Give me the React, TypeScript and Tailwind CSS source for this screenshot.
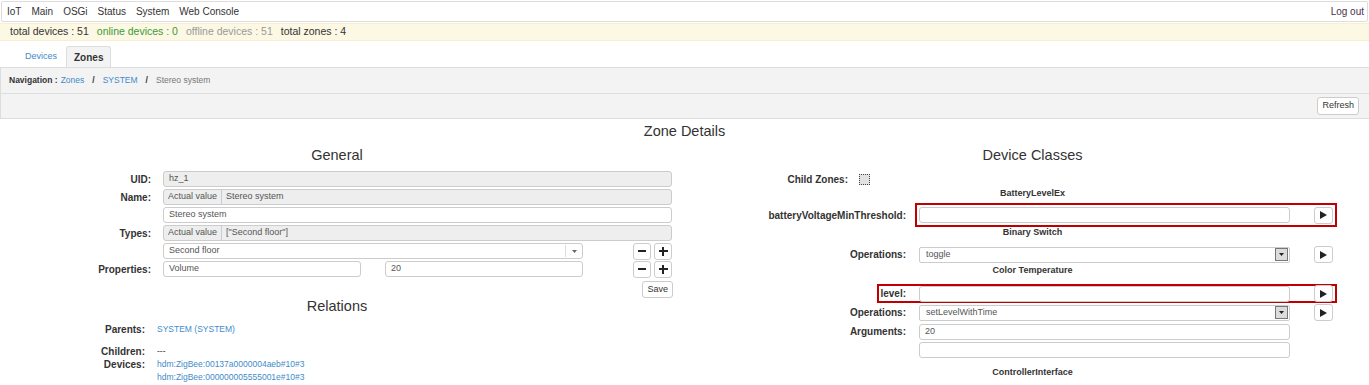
import React from 'react';

const Play = () => (
  <button className="w-[19px] h-[17px] shrink-0 bg-white border border-[#ccc] rounded-[3px] flex items-center justify-center">
    <svg width="7" height="8" viewBox="0 0 7 8"><path d="M0 0 L7 4 L0 8 Z" fill="#222" /></svg>
  </button>
);

const PlusMinus = () => (
  <div className="flex gap-[3px] ml-auto">
    <button className="w-[18px] h-[17px] bg-white border border-[#ccc] rounded-[3px] flex items-center justify-center">
      <span className="block w-[8px] h-[2px] bg-[#222]" />
    </button>
    <button className="w-[18px] h-[17px] bg-white border border-[#ccc] rounded-[3px] flex items-center justify-center relative">
      <span className="block w-[9px] h-[2px] bg-[#222]" />
      <span className="absolute block w-[2px] h-[9px] bg-[#222]" />
    </button>
  </div>
);

const WinSelect = ({ value }: { value: string }) => (
  <div className="w-[371px] h-[16px] bg-white border border-[#ccc] rounded-[2px] flex items-center pl-[6px] pr-[1px] text-[9px] text-[#555]">
    <span className="flex-1">{value}</span>
    <span className="w-[13px] h-[13px] bg-[#dcdcdc] border border-[#777] flex items-center justify-center">
      <svg width="5" height="3" viewBox="0 0 5 3"><path d="M0 0 L5 0 L2.5 3 Z" fill="#222" /></svg>
    </span>
  </div>
);

const Input = ({ value = '', w = 'w-[371px]', ro = false }: { value?: string; w?: string; ro?: boolean }) => (
  <div className={`${w} h-[16px] border border-[#ccc] rounded-[3px] flex items-center px-[5px] text-[9px] text-[#555] ${ro ? 'bg-[#eee]' : 'bg-white'}`}>
    {value}
  </div>
);

const Group = ({ value }: { value: string }) => (
  <div className="w-[509px] h-[16px] border border-[#ccc] rounded-[3px] bg-[#eee] flex items-center text-[9px] text-[#555]">
    <span className="px-[4px] h-full flex items-center border-r border-[#ccc]">Actual value</span>
    <span className="px-[4px]">{value}</span>
  </div>
);

const LRow = ({ label, children }: { label?: string; children: React.ReactNode }) => (
  <div className="flex items-center h-[18px]">
    <div className="w-[151px] text-right font-bold text-[10px] text-[#333]">{label}</div>
    <div className="ml-[12px] w-[509px] flex items-center">{children}</div>
  </div>
);

const RRow = ({ label, children }: { label: string; children: React.ReactNode }) => (
  <div className="flex items-center h-[17px]">
    <div className="w-[222px] text-right font-bold text-[10px] text-[#333]">{label}</div>
    <div className="ml-[13px]">{children}</div>
  </div>
);

const ClassTitle = ({ children }: { children: React.ReactNode }) => (
  <div className="h-[12px] flex items-center justify-center font-bold text-[9px] text-[#333]">{children}</div>
);

export default function App() {
  return (
    <div className="w-[1369px] h-[385px] overflow-hidden bg-white font-['Liberation_Sans',Arial,sans-serif] text-[#333]">
      {/* top menu */}
      <div className="mt-[1px] mx-[1px] h-[21px] border border-[#ddd] rounded-[2px] flex items-center justify-between pl-[5px] pr-[3px] text-[10px]">
        <div className="flex gap-[10px]">
          <span>IoT</span><span>Main</span><span>OSGi</span><span>Status</span><span>System</span><span>Web Console</span>
        </div>
        <span className="text-[#4b3050]">Log out</span>
      </div>

      {/* status */}
      <div className="mt-[1px] h-[18px] bg-[#fcf8e3] border-y border-[#f7efd2] flex items-center pl-[10px] gap-[8px] text-[10.5px]">
        <span>total devices : 51</span>
        <span className="text-[#3a9a3a]">online devices : 0</span>
        <span className="text-[#9a9a9a]">offline devices : 51</span>
        <span>total zones : 4</span>
      </div>

      {/* tabs */}
      <div className="h-[26px] flex items-end pl-[25px] text-[9px]">
        <span className="h-[21px] flex items-center text-[#428bca] pr-[9px]">Devices</span>
        <span className="h-[21px] px-[7px] flex items-center font-bold text-[10px] bg-[#f3f3f3] border border-b-0 border-[#ddd] rounded-t-[3px]">Zones</span>
      </div>

      {/* panel */}
      <div className="bg-[#f3f3f3] border-l border-t border-[#ddd]">
        <div className="h-[26px] flex items-center pl-[8px] text-[8.5px] border-b border-[#ddd]">
          <span className="font-bold">Navigation :</span>
          <span className="text-[#428bca] ml-[3px]">Zones</span>
          <span className="mx-[8px] font-bold">/</span>
          <span className="text-[#428bca]">SYSTEM</span>
          <span className="mx-[8px] font-bold">/</span>
          <span className="text-[#777]">Stereo system</span>
        </div>
        <div className="h-[25px] flex items-center justify-end pr-[10px] border-b border-[#ddd]">
          <button className="h-[18px] px-[4px] bg-white border border-[#ccc] rounded-[3px] text-[9px] text-[#333]">Refresh</button>
        </div>
      </div>

      {/* content */}
      <div className="h-[26px] flex items-center justify-center text-[14.5px] text-[#333]">Zone Details</div>

      <div className="grid grid-cols-[684px_1fr]">
        {/* left */}
        <div>
          <div className="h-[22px] flex items-center justify-center pr-[10px] text-[14.5px]">General</div>
          <div className="mt-[3px]">
            <LRow label="UID:"><Input w="w-[509px]" ro value="hz_1" /></LRow>
            <LRow label="Name:"><Group value="Stereo system" /></LRow>
            <LRow><Input w="w-[509px]" value="Stereo system" /></LRow>
            <LRow label="Types:"><Group value={'["Second floor"]'} /></LRow>
            <LRow>
              <div className="w-[420px] h-[16px] border border-[#ccc] rounded-[3px] bg-white flex items-center text-[9px] text-[#555]">
                <span className="flex-1 pl-[5px]">Second floor</span>
                <span className="w-[17px] h-[12px] border-l border-[#ddd] flex items-center justify-center">
                  <svg width="5" height="3" viewBox="0 0 5 3"><path d="M0 0 L5 0 L2.5 3 Z" fill="#666" /></svg>
                </span>
              </div>
              <PlusMinus />
            </LRow>
            <LRow label="Properties:">
              <Input w="w-[198px]" value="Volume" />
              <div className="ml-[24px]"><Input w="w-[198px]" value="20" /></div>
              <PlusMinus />
            </LRow>
            <div className="flex justify-end pr-[11px] mt-[3px]">
              <button className="h-[17px] px-[4px] bg-white border border-[#ccc] rounded-[3px] text-[9px] text-[#333]">Save</button>
            </div>
          </div>

          <div className="h-[18px] flex items-center justify-center pr-[10px] text-[14.5px]">Relations</div>
          <div className="mt-[6px] text-[10px]">
            <div className="flex items-center h-[14px]">
              <div className="w-[145px] text-right font-bold">Parents:</div>
              <div className="ml-[12px] text-[#428bca] text-[8.5px]">SYSTEM (SYSTEM)</div>
            </div>
            <div className="flex items-center h-[13px] mt-[9px]">
              <div className="w-[145px] text-right font-bold">Children:</div>
              <div className="ml-[12px] text-[8.5px]">---</div>
            </div>
            <div className="flex items-start">
              <div className="w-[145px] text-right font-bold leading-[13px]">Devices:</div>
              <div className="ml-[12px] text-[#428bca] text-[8.5px] leading-[13px]">
                <div>hdm:ZigBee:00137a0000004aeb#10#3</div>
                <div>hdm:ZigBee:000000005555001e#10#3</div>
              </div>
            </div>
          </div>
        </div>

        {/* right */}
        <div>
          <div className="h-[22px] flex items-center justify-center pl-[12px] text-[14.5px]">Device Classes</div>
          <div className="mt-[3px] h-[18px] flex items-center">
            <div className="w-[164px] text-right font-bold text-[10px]">Child Zones:</div>
            <div className="ml-[11px] w-[11px] h-[11px] border border-dotted border-[#444] bg-[#e2e2e2]" />
          </div>
          <div className="pl-[12px]"><ClassTitle>BatteryLevelEx</ClassTitle></div>
          <div className="mt-[3px] flex items-center">
            <div className="w-[222px] text-right font-bold text-[10px]">batteryVoltageMinThreshold:</div>
            <div className="ml-[9px] h-[24px] border-2 border-[#c00000] flex items-center px-[2px]">
              <Input />
              <div className="ml-[24px]"><Play /></div>
            </div>
          </div>
          <div className="pl-[12px]"><ClassTitle>Binary Switch</ClassTitle></div>
          <div className="mt-[7px]">
            <RRow label="Operations:">
              <div className="flex items-center"><WinSelect value="toggle" /><div className="ml-[24px]"><Play /></div></div>
            </RRow>
          </div>
          <div className="mt-[2px] pl-[12px]"><ClassTitle>Color Temperature</ClassTitle></div>
          <div className="mt-[7px] flex items-center">
            <div className="ml-[193px] h-[19px] border-2 border-[#c00000] flex items-center pr-[2px]">
              <div className="w-[27px] text-right font-bold text-[10px]">level:</div>
              <div className="ml-[13px]"><Input /></div>
              <div className="ml-[24px]"><Play /></div>
            </div>
          </div>
          <div className="mt-[1px]">
            <RRow label="Operations:">
              <div className="flex items-center"><WinSelect value="setLevelWithTime" /><div className="ml-[24px]"><Play /></div></div>
            </RRow>
          </div>
          <div className="mt-[2px]">
            <RRow label="Arguments:"><Input value="20" /></RRow>
          </div>
          <div className="mt-[2px] flex">
            <div className="ml-[235px]"><Input /></div>
          </div>
          <div className="mt-[9px] pl-[12px]"><ClassTitle>ControllerInterface</ClassTitle></div>
        </div>
      </div>
    </div>
  );
}
